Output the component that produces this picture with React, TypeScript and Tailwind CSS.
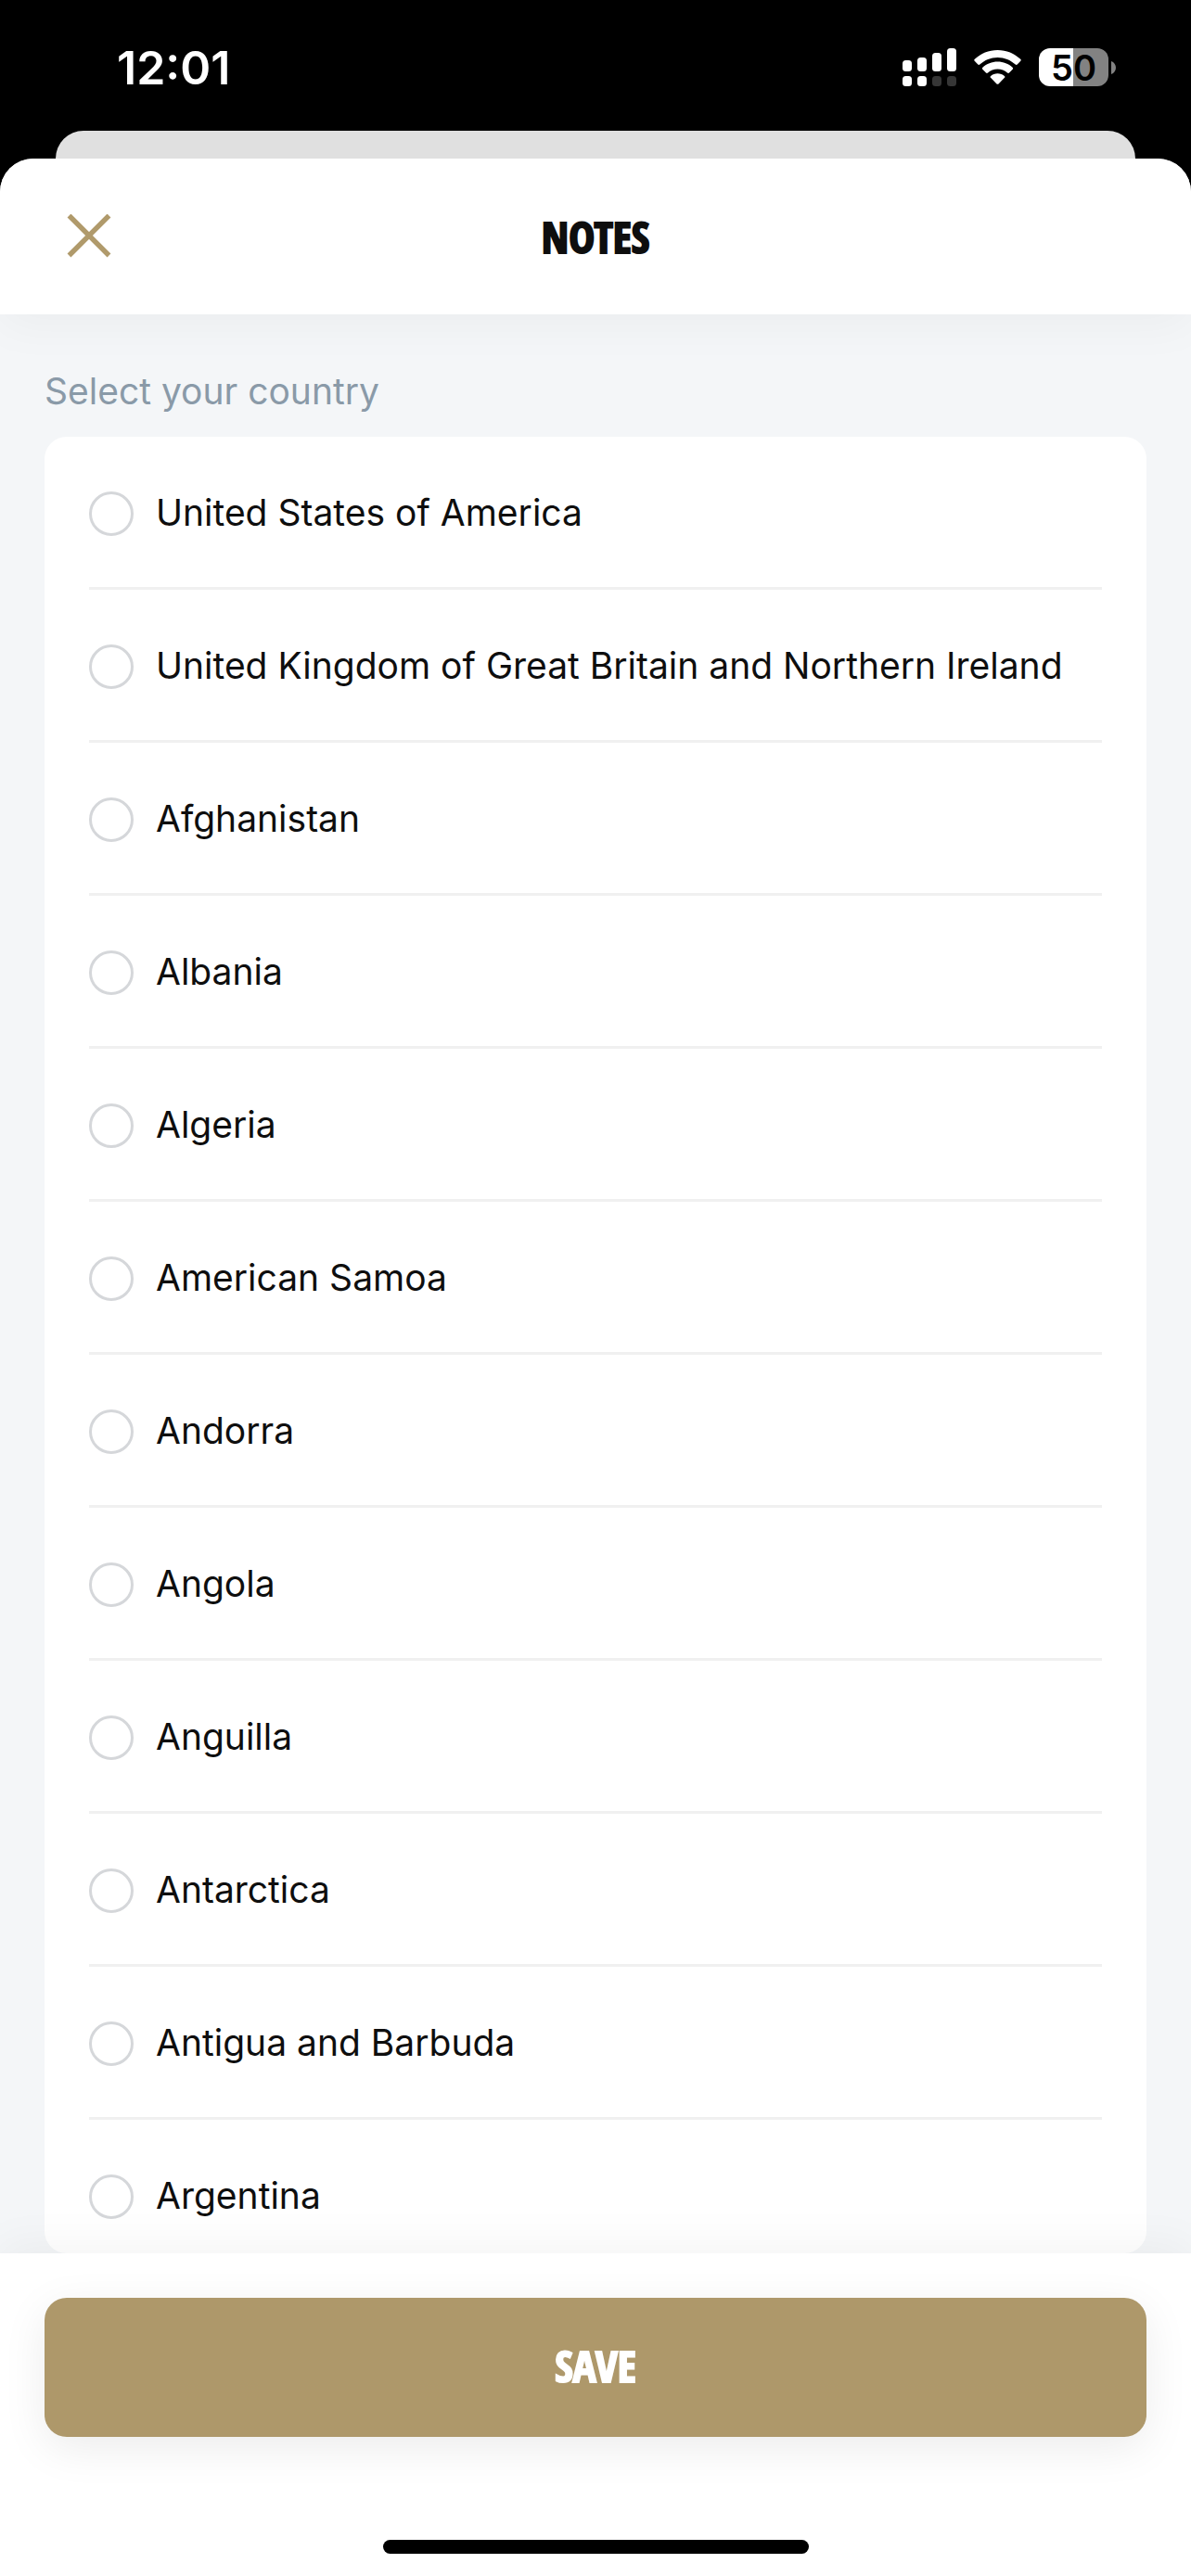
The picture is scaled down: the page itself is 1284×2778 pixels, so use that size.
import { useState } from "react";

const countries = [
  "United States of America",
  "United Kingdom of Great Britain and Northern Ireland",
  "Afghanistan",
  "Albania",
  "Algeria",
  "American Samoa",
  "Andorra",
  "Angola",
  "Anguilla",
  "Antarctica",
  "Antigua and Barbuda",
  "Argentina",
];

function SignalIcon() {
  return (
    <svg width="58" height="41" viewBox="0 0 58 41" aria-hidden="true">
      <g fill="#fff">
        <rect x="0" y="13" width="10" height="12" rx="3.5" />
        <rect x="16" y="10" width="10" height="15" rx="3.5" />
        <rect x="32" y="5" width="10" height="20" rx="3.5" />
        <rect x="48" y="0" width="10" height="25" rx="3.5" />
        <rect x="0" y="30" width="10" height="11" rx="3.5" />
        <rect x="16" y="30" width="10" height="11" rx="3.5" />
      </g>
      <g fill="#363636">
        <rect x="32" y="30" width="10" height="11" rx="3.5" />
        <rect x="48" y="30" width="10" height="11" rx="3.5" />
      </g>
    </svg>
  );
}

function WifiIcon() {
  return (
    <svg width="51" height="37" viewBox="0 0 51 37" fill="#fff" aria-hidden="true">
      <path d="M25.500 0C35 0 43.700 3.700 50.200 9.800C50.900 10.500 50.900 11.200 50.300 11.800L46.700 15.500C46.100 16.100 45.300 16.100 44.700 15.500C39.600 10.700 32.800 7.900 25.500 7.900C18.200 7.900 11.400 10.700 6.300 15.500C5.700 16.100 4.900 16.100 4.300 15.500L.7 11.800C.1 11.200 .1 10.500 .8 9.800C7.300 3.700 16 0 25.500 0Z" />
      <path d="M25.500 12.600C31.700 12.600 37.300 14.900 41.600 18.800C42.300 19.500 42.300 20.200 41.700 20.800L38 24.500C37.400 25.100 36.700 25.100 36 24.500C33.200 22 29.500 20.500 25.500 20.500C21.500 20.500 17.800 22 15 24.500C14.300 25.100 13.600 25.100 13 24.500L9.300 20.800C8.700 20.200 8.700 19.500 9.400 18.800C13.700 14.900 19.300 12.600 25.500 12.600Z" />
      <path d="M25.500 25.300C28.300 25.300 30.900 26.300 32.900 27.900C33.600 28.500 33.600 29.200 33 29.800L26.500 36.400C25.900 37 25.100 37 24.500 36.400L18 29.800C17.400 29.200 17.400 28.500 18.100 27.900C20.100 26.300 22.700 25.300 25.500 25.300Z" />
    </svg>
  );
}

function Battery() {
  return (
    <div className="flex items-center gap-[3px]">
      <div className="flex h-[41px] w-[75px] items-center justify-center rounded-xl bg-[linear-gradient(to_right,#fff_50%,#828282_50%)] text-[38px] leading-none font-semibold text-black">
        50
      </div>
      <svg width="5" height="14" viewBox="0 0 5 14" fill="#828282" aria-hidden="true">
        <path d="M0 0C3 1 5 3.800 5 7S3 13 0 14Z" />
      </svg>
    </div>
  );
}

export default function App() {
  const [selected, setSelected] = useState("");

  return (
    <div className="flex h-screen flex-col bg-black font-['Inter','Liberation_Sans',sans-serif]">
      <div className="flex h-[141px] shrink-0 items-center justify-between pr-[81px] pl-[126px] pt-1">
        <span className="text-[50px] leading-none font-semibold text-white">12:01</span>
        <div className="flex items-center gap-[19px]">
          <SignalIcon />
          <WifiIcon />
          <Battery />
        </div>
      </div>

      <div className="mx-[60px] h-[30px] shrink-0 rounded-t-[30px] bg-[#e0e0e0]" />

      <main className="flex min-h-0 flex-1 flex-col overflow-hidden rounded-t-[36px] bg-[#f4f6f8]">
        <header className="relative z-10 grid h-[168px] shrink-0 grid-cols-[96px_1fr_96px] items-center bg-white px-12 shadow-[0_12px_48px_rgba(0,0,0,0.04)]">
          <button type="button" aria-label="Close" className="flex h-24 w-24 items-center justify-center">
            <svg width="48" height="48" viewBox="0 0 48 48" stroke="#b09a6b" strokeWidth="5.500" aria-hidden="true">
              <path d="M2.500 1.500L45.500 44.500M45.500 1.500L2.500 44.500" />
            </svg>
          </button>
          <h1 className="text-center font-['Open_Sans_Condensed','Open_Sans',sans-serif] text-[47px] leading-none font-black text-[#0e0e0e] [-webkit-text-stroke:2px_currentColor]">
            NOTES
          </h1>
        </header>

        <fieldset className="flex min-h-0 flex-1 flex-col px-12">
          <legend className="pt-[54px] pb-5 text-[39px] leading-[58px] text-[#8a9aa8]">Select your country</legend>
          <ul className="min-h-0 flex-1 overflow-y-auto rounded-3xl bg-white px-12 [scrollbar-width:none]">
            {countries.map((name) => (
              <li key={name} className="border-b-[3px] border-[#f0f0f0] last:border-b-0">
                <label className="flex h-[162px] items-center gap-6 pt-1 text-[39px] leading-none text-[#0e0e0e]">
                  <input
                    type="radio"
                    name="country"
                    value={name}
                    checked={selected === name}
                    onChange={() => setSelected(name)}
                    className="size-12 shrink-0 appearance-none rounded-full border-[3px] border-[#d5d7da] bg-white checked:border-[12px] checked:border-[#ae986a]"
                  />
                  <span className="pb-1">{name}</span>
                </label>
              </li>
            ))}
          </ul>
        </fieldset>

        <footer className="relative z-10 flex shrink-0 flex-col items-center bg-white px-12 pt-12 pb-6 shadow-[0_-6px_48px_rgba(0,0,0,0.05)]">
          <button
            type="button"
            className="h-[150px] w-full rounded-3xl bg-[#ae986a] pb-1 font-['Open_Sans_Condensed','Open_Sans',sans-serif] text-[47px] leading-none font-black text-white shadow-[0_12px_48px_rgba(0,0,0,0.08)] [-webkit-text-stroke:2px_currentColor]"
          >
            SAVE
          </button>
          <div className="mt-[111px] h-[15px] w-[459px] rounded-full bg-black" />
        </footer>
      </main>
    </div>
  );
}
